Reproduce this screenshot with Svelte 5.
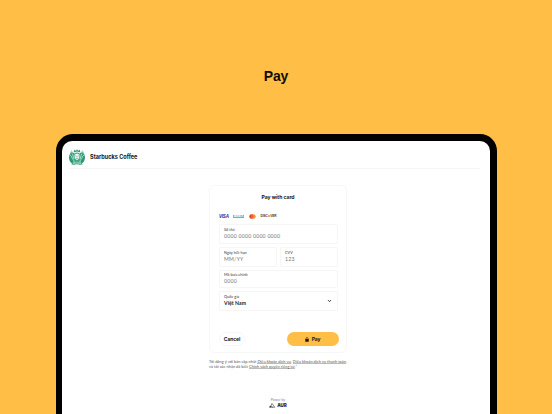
<script>
	const fields = [
		{ id: 'number', label: 'Số thẻ', value: '0000 0000 0000 0000' },
		{ id: 'expiry', label: 'Ngày hết hạn', value: 'MM/YY' },
		{ id: 'cvv', label: 'CVV', value: '123' },
		{ id: 'postal', label: 'Mã bưu chính', value: '0000' }
	];
</script>

<main>
	<h1>Pay</h1>

	<div class="tablet">
		<div class="screen">
			<header>
				<svg class="logo" viewBox="0 0 32 32">
					<path d="M5 6C2 9 0 13 0 17c0 7 5 13 11 15l3-6-5-8 2-9z" fill="#2c9a75" />
					<path d="M27 6c3 3 5 7 5 11 0 7-5 13-11 15l-3-6 5-8-2-9z" fill="#2c9a75" />
					<path d="M9 7l2-6 3 3 2-4 2 4 3-3 2 6-7-2z" fill="#2c9a75" />
					<path d="M9 15c0-11 14-11 14 0v7l4 9H5l4-9z" fill="#43a483" />
					<path
						d="M2 12c4 1 3 6 6 9s2 6 1 9M5 8c4 2 2 7 5 12M30 12c-4 1-3 6-6 9s-2 6-1 9M27 8c-4 2-2 7-5 12M12 26v5M16 25v7M20 26v5"
						fill="none"
						stroke="#e5f5ed"
						stroke-width="1.3"
					/>
					<path d="M11 13c1-5 9-5 10 0 0 5-2 8-5 9-3-1-5-4-5-9z" fill="#f2faf6" />
					<path d="M12 14h3m2 0h3m-4 0v3m-2 2h4" fill="none" stroke="#2c9a75" stroke-width="1" />
					<path d="M5 3l1 3M27 3l-1 3M2 6l3 1M30 6l-3 1" stroke="#74bda3" stroke-width="1.5" />
				</svg>
				<span>Starbucks Coffee</span>
			</header>

			<section class="card">
				<h2>Pay with card</h2>

				<div class="brands">
					<span class="visa">VISA</span>
					<span class="amex">AMEX</span>
					<svg class="mastercard" viewBox="0 0 14 10">
						<circle cx="5" cy="5" r="4.5" fill="#e33b32" />
						<circle cx="9" cy="5" r="4.5" fill="#f49a35" />
						<path d="M7 1a4.5 4.5 0 0 1 0 8 4.5 4.5 0 0 1 0-8z" fill="#ef6530" />
					</svg>
					<span class="discover">DISC<i></i>VER</span>
				</div>

				<div class="form">
					{#each fields as field (field.id)}
						<div class="field {field.id}">
							<span class="label">{field.label}</span>
							<span class="value">{field.value}</span>
						</div>
					{/each}
					<div class="field country">
						<span class="label">Quốc gia</span>
						<span class="value">Việt Nam</span>
						<svg class="chevron" viewBox="0 0 8 6">
							<path d="M1.5 1.5L4 4l2.5-2.5" fill="none" stroke="#222" stroke-width="1.4" />
						</svg>
					</div>
				</div>

				<div class="actions">
					<button class="cancel">Cancel</button>
					<button class="pay">
						<svg viewBox="0 0 8 10">
							<rect x="0.5" y="4" width="7" height="5.5" rx="1" fill="#241b0c" />
							<path d="M2 4.5V3a2 2 0 0 1 4 0v1.5" fill="none" stroke="#241b0c" stroke-width="1.2" />
						</svg>
						<span>Pay</span>
					</button>
				</div>
			</section>

			<p class="terms">
				<span class="line first">Tôi đồng ý với bản cập nhật <u>Điều khoản dịch vụ</u>, <u>Điều khoản dịch vụ thanh toán</u>,</span>
				<span class="line second">và tôi xác nhận đã biết <u>Chính sách quyền riêng tư</u>.*</span>
			</p>

			<footer>
				<span>Power by</span>
				<div class="powered">
					<svg viewBox="0 0 14 10">
						<path d="M3.5 6L6 1l5.5 7.5H1L3.5 6l4 2.5" fill="none" stroke="#333" stroke-width="1.2" />
						<circle cx="2.5" cy="7.5" r="1.5" fill="#333" />
					</svg>
					<b>AUR</b>
				</div>
			</footer>
		</div>
	</div>
</main>

<style>
	:global(body) {
		margin: 0;
		overflow: hidden;
	}

	main {
		width: 552px;
		height: 414px;
		box-sizing: border-box;
		padding-top: 67px;
		overflow: hidden;
		background: #ffbf47;
		color: #171717;
		font-family: Lato, 'Noto Sans', sans-serif;
	}

	h1 {
		height: 67px;
		margin: 0;
		color: #110d05;
		font: 700 14px/18px 'Liberation Sans', sans-serif;
		letter-spacing: -0.1px;
		text-align: center;
	}

	.tablet {
		width: 441px;
		height: 320px;
		box-sizing: border-box;
		margin-left: 55.5px;
		padding: 7px 6.5px 0;
		border-radius: 17px 17px 0 0;
		background: #000;
	}

	.screen {
		height: 313px;
		border-radius: 10px 10px 0 0;
		background: #fff;
	}

	header {
		display: flex;
		align-items: center;
		gap: 5px;
		height: 27px;
		margin: 0 10px 0 7px;
		border-bottom: 1px solid #f6f6f6;
		font: 700 5.6px/8px Inter, sans-serif;
		letter-spacing: -0.02px;
	}

	header span {
		padding-top: 5px;
	}

	.logo {
		width: 16px;
		height: 16px;
		margin-top: 5px;
	}

	.card {
		width: 138px;
		height: 168px;
		box-sizing: border-box;
		margin: 16px 0 0 147px;
		padding: 7.5px 8px 0 9px;
		border: 1px solid #f7f7f7;
		border-radius: 6px;
	}

	h2 {
		height: 20px;
		margin: 0 1px 0 0;
		font: 700 5.1px/6px Inter, sans-serif;
		letter-spacing: -0.04px;
		text-align: center;
	}

	.brands {
		display: flex;
		align-items: center;
		height: 6px;
		font-family: 'Liberation Sans', sans-serif;
		font-size: 3.5px;
		font-weight: 700;
		line-height: 5px;
	}

	.visa {
		width: 14px;
		color: #30269b;
		font-size: 4.5px;
		font-style: italic;
		letter-spacing: -0.2px;
	}

	.amex {
		width: 11px;
		height: 3px;
		color: #fff;
		background: #63b1d8;
		font-size: 3.3px;
		line-height: 3px;
		text-align: center;
	}

	.mastercard {
		width: 7px;
		height: 5px;
		margin: 0 4.5px 0 5px;
	}

	.discover {
		color: #403832;
		font-size: 3.2px;
		letter-spacing: -0.12px;
		white-space: nowrap;
	}

	.discover i {
		display: inline-block;
		width: 2.5px;
		height: 2.5px;
		border-radius: 50%;
		background: #ef8540;
	}

	.form {
		display: grid;
		grid-template-columns: 58px 58px;
		grid-template-rows: 20px 20px 18px 20px;
		gap: 3px;
		margin-top: 4.5px;
	}

	.field {
		box-sizing: border-box;
		padding: 3px 4px 0;
		border: 1px solid #f6f6f6;
		border-radius: 2px;
	}

	.number,
	.postal,
	.country {
		grid-column: 1 / 3;
	}

	.postal {
		padding-top: 2px;
	}

	.label,
	.value {
		display: block;
		white-space: nowrap;
	}

	.label {
		height: 6px;
		color: #333;
		font-size: 3.8px;
		line-height: 4px;
		letter-spacing: 0.06px;
	}

	.value {
		color: #777;
		font-size: 5.2px;
		line-height: 5px;
		letter-spacing: 0.22px;
	}

	.country {
		display: grid;
		grid-template-columns: 1fr 5px;
		grid-template-rows: 6px 6px;
	}

	.country .value {
		grid-column: 1;
		color: #252525;
		font-weight: 700;
		letter-spacing: 0.05px;
	}

	.chevron {
		grid-column: 2;
		grid-row: 1 / 3;
		width: 5px;
		height: 4px;
		margin: 4px 0 0 -1px;
	}

	.actions {
		display: flex;
		justify-content: space-between;
		margin: 21px -0.5px 0 0;
	}

	button {
		height: 14px;
		padding: 0;
		border: 0;
		border-radius: 7px;
		color: #171717;
		font: 700 5px/14px Inter, sans-serif;
		letter-spacing: -0.1px;
	}

	.cancel {
		width: 26px;
		border: 1px solid #f7f7f7;
		line-height: 12px;
		background: #fff;
	}

	.pay {
		display: flex;
		align-items: center;
		justify-content: center;
		gap: 3px;
		width: 52px;
		background: #ffbf47;
	}

	.pay svg {
		width: 4px;
		height: 5px;
	}

	.terms {
		width: 142px;
		height: 11px;
		margin: 5.5px 0 0 147px;
		color: #555;
		font-size: 3.88px;
		line-height: 5px;
		letter-spacing: 0.04px;
	}

	.line {
		display: block;
		white-space: nowrap;
	}

	u {
		text-decoration: none;
		border-bottom: 1px solid #bbb;
	}

	.line u {
		display: inline-block;
		height: 4px;
		line-height: 5px;
	}

	footer {
		display: flex;
		flex-direction: column;
		align-items: center;
		width: 40px;
		margin: 28.5px 0 0 196px;
		color: #888;
		font-size: 3.5px;
		line-height: 4px;
	}

	.powered {
		display: flex;
		align-items: center;
		gap: 1px;
		height: 7px;
		color: #333;
		font: 700 4.5px/6px Inter, sans-serif;
	}

	.powered svg {
		width: 7px;
		height: 5px;
	}
</style>
